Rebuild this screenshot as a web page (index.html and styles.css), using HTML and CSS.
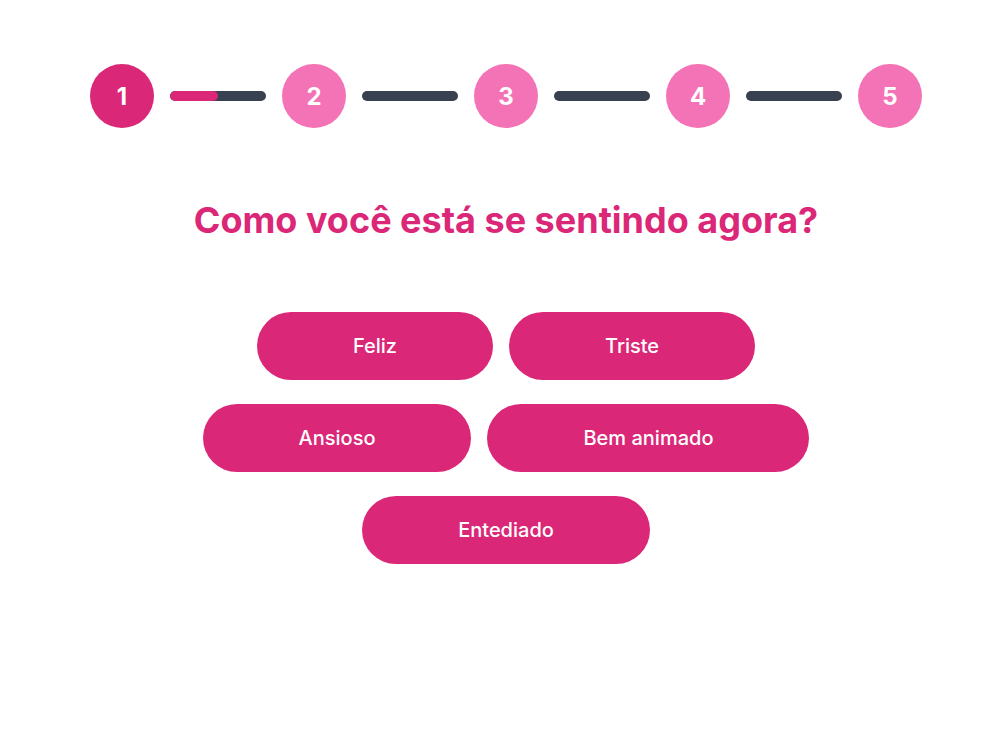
FILE: index.html
```html
<!DOCTYPE html>
<html lang="pt-BR">
<head>
<meta charset="utf-8">
<title>Quiz</title>
<link rel="stylesheet" href="styles.css">
</head>
<body>
<main class="page">
  <div class="stepper">
    <div class="step step-active">1</div>
    <div class="bar"><div class="bar-fill" style="width:50%"></div></div>
    <div class="step">2</div>
    <div class="bar"></div>
    <div class="step">3</div>
    <div class="bar"></div>
    <div class="step">4</div>
    <div class="bar"></div>
    <div class="step">5</div>
  </div>
  <h1 class="question">Como você está se sentindo agora?</h1>
  <div class="options">
    <div class="row">
      <button class="option">Feliz</button>
      <button class="option">Triste</button>
    </div>
    <div class="row">
      <button class="option">Ansioso</button>
      <button class="option">Bem animado</button>
    </div>
    <div class="row">
      <button class="option">Entediado</button>
    </div>
  </div>
</main>
</body>
</html>
```
FILE: styles.css
```css
* { box-sizing: border-box; }
html, body { margin: 0; padding: 0; background: #fff; }
body { font-family: Inter, "Noto Sans", sans-serif; }
.page {
  padding: 64px 0 0 9px;
  display: flex;
  flex-direction: column;
  align-items: center;
}
.stepper {
  display: flex;
  align-items: center;
  gap: 16px;
}
.step {
  width: 64px;
  height: 64px;
  border-radius: 50%;
  background: #f472b6;
  color: #fff;
  font-weight: 700;
  font-size: 24px;
  display: flex;
  align-items: center;
  justify-content: center;
}
.step-active { background: #db2777; }
.bar {
  width: 96px;
  height: 10px;
  border-radius: 9999px;
  background: #374151;
  overflow: hidden;
}
.bar-fill {
  height: 100%;
  background: #db2777;
  border-radius: 9999px;
}
.question {
  margin: 72px 0 0;
  font-size: 36px;
  line-height: 40px;
  font-weight: 700;
  color: #db2777;
}
.options {
  margin-top: 72px;
  display: flex;
  flex-direction: column;
  align-items: center;
  gap: 24px;
}
.row {
  display: flex;
  gap: 16px;
}
.option {
  border: 0;
  background: #db2777;
  color: #fff;
  font-family: Inter, "Noto Sans", sans-serif;
  font-size: 20px;
  line-height: 28px;
  font-weight: 500;
  padding: 20px 96px;
  border-radius: 9999px;
  cursor: pointer;
}
```
